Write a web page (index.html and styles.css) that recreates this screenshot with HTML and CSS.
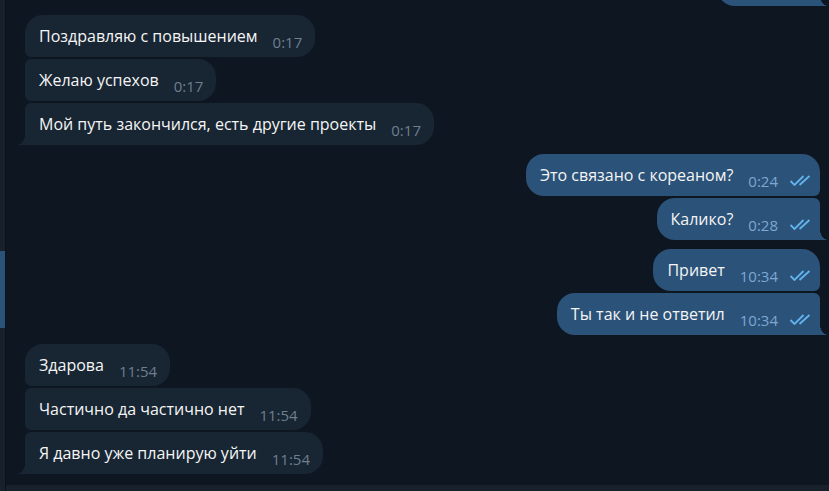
FILE: index.html
```html
<!DOCTYPE html>
<html lang="ru">
<head>
    <meta charset="UTF-8">
    <title>Чат</title>
    <link rel="stylesheet" href="styles.css">
</head>
<body>

<div class="side">
    <div class="side-mark"></div>
</div>

<div class="main">
    <div class="chat">

        <!-- предыдущее сообщение, уехало за верх экрана -->
        <div class="group out">
            <div class="msg last stub"></div>
        </div>

        <div class="group in">
            <div class="msg first"><span class="text">Поздравляю с повышением</span><span class="time">0:17</span></div>
            <div class="msg"><span class="text">Желаю успехов</span><span class="time">0:17</span></div>
            <div class="msg last"><span class="text">Мой путь закончился, есть другие проекты</span><span class="time">0:17</span></div>
        </div>

        <div class="group out">
            <div class="msg first"><span class="text">Это связано с кореаном?</span><span class="time">0:24</span>
                <svg class="check" viewBox="0 0 22 11"><path d="M1.5 6 L5.5 10 L14.5 1 M10.5 10 L20.5 1"/></svg></div>
            <div class="msg last"><span class="text">Калико?</span><span class="time">0:28</span>
                <svg class="check" viewBox="0 0 22 11"><path d="M1.5 6 L5.5 10 L14.5 1 M10.5 10 L20.5 1"/></svg></div>
        </div>

        <div class="group out">
            <div class="msg first"><span class="text">Привет</span><span class="time">10:34</span>
                <svg class="check" viewBox="0 0 22 11"><path d="M1.5 6 L5.5 10 L14.5 1 M10.5 10 L20.5 1"/></svg></div>
            <div class="msg last"><span class="text">Ты так и не ответил</span><span class="time">10:34</span>
                <svg class="check" viewBox="0 0 22 11"><path d="M1.5 6 L5.5 10 L14.5 1 M10.5 10 L20.5 1"/></svg></div>
        </div>

        <div class="group in">
            <div class="msg first"><span class="text">Здарова</span><span class="time">11:54</span></div>
            <div class="msg"><span class="text">Частично да частично нет</span><span class="time">11:54</span></div>
            <div class="msg last"><span class="text">Я давно уже планирую уйти</span><span class="time">11:54</span></div>
        </div>

    </div>
    <div class="bottom"></div>
</div>

</body>
</html>
```

FILE: styles.css
```css
* {
    margin: 0;
    padding: 0;
    box-sizing: border-box;
}

body {
    font-family: 'Open Sans', sans-serif;
    background-color: #0e1621;
    color: #f5f5f5;
    height: 491px;
    display: flex;
    overflow: hidden;
}

.side {
    width: 6px;
    background-color: #17212b;
    border-right: 1px solid #0b121b;
    padding-top: 251px;
}

.side-mark {
    height: 77px;
    background-color: #2b5278;
}

.main {
    flex: 1;
    display: flex;
    flex-direction: column;
}

.chat {
    flex: 1;
    display: flex;
    flex-direction: column;
    justify-content: flex-end;
    gap: 9px;
    padding: 0 9px 11px 19px;
    overflow: hidden;
}

.bottom {
    height: 6px;
    background-color: #17212b;
}

.group {
    display: flex;
    flex-direction: column;
    gap: 2px;
}

.group.out {
    align-items: flex-end;
}

.group.in {
    align-items: flex-start;
}

.msg {
    position: relative;
    display: flex;
    align-items: flex-start;
    height: 42px;
    padding: 10px 13px 0 14px;
    font-size: 16px;
}

.msg.stub {
    width: 103px;
}

.text {
    line-height: 22px;
}

.time {
    margin-top: 7px;
    margin-left: 15px;
    font-size: 15px;
    line-height: 20px;
}

/* входящие */
.in .msg {
    background-color: #182533;
    border-radius: 6px 18px 18px 6px;
}

.in .msg.first {
    border-top-left-radius: 18px;
}

.in .msg.last {
    border-bottom-left-radius: 0;
}

.in .msg.last::before {
    content: '';
    position: absolute;
    left: -8px;
    bottom: 0;
    width: 8px;
    height: 10px;
    background: radial-gradient(8px 10px at 0 0, transparent 96%, #182533 100%);
}

.in .time {
    color: #6d7f8f;
}

/* исходящие */
.out .msg {
    background-color: #2b5278;
    border-radius: 18px 6px 6px 18px;
    padding-right: 9px;
}

.out .msg.first {
    border-top-right-radius: 18px;
}

.out .msg.last {
    border-bottom-right-radius: 0;
}

.out .msg.last::after {
    content: '';
    position: absolute;
    right: -8px;
    bottom: 0;
    width: 8px;
    height: 10px;
    background: radial-gradient(8px 10px at 100% 0, transparent 96%, #2b5278 100%);
}

.out .time {
    color: #7da8d3;
}

.check {
    width: 22px;
    height: 11px;
    margin-top: 11px;
    margin-left: 11px;
    fill: none;
    stroke: #62b3ee;
    stroke-width: 1.8;
}
```
